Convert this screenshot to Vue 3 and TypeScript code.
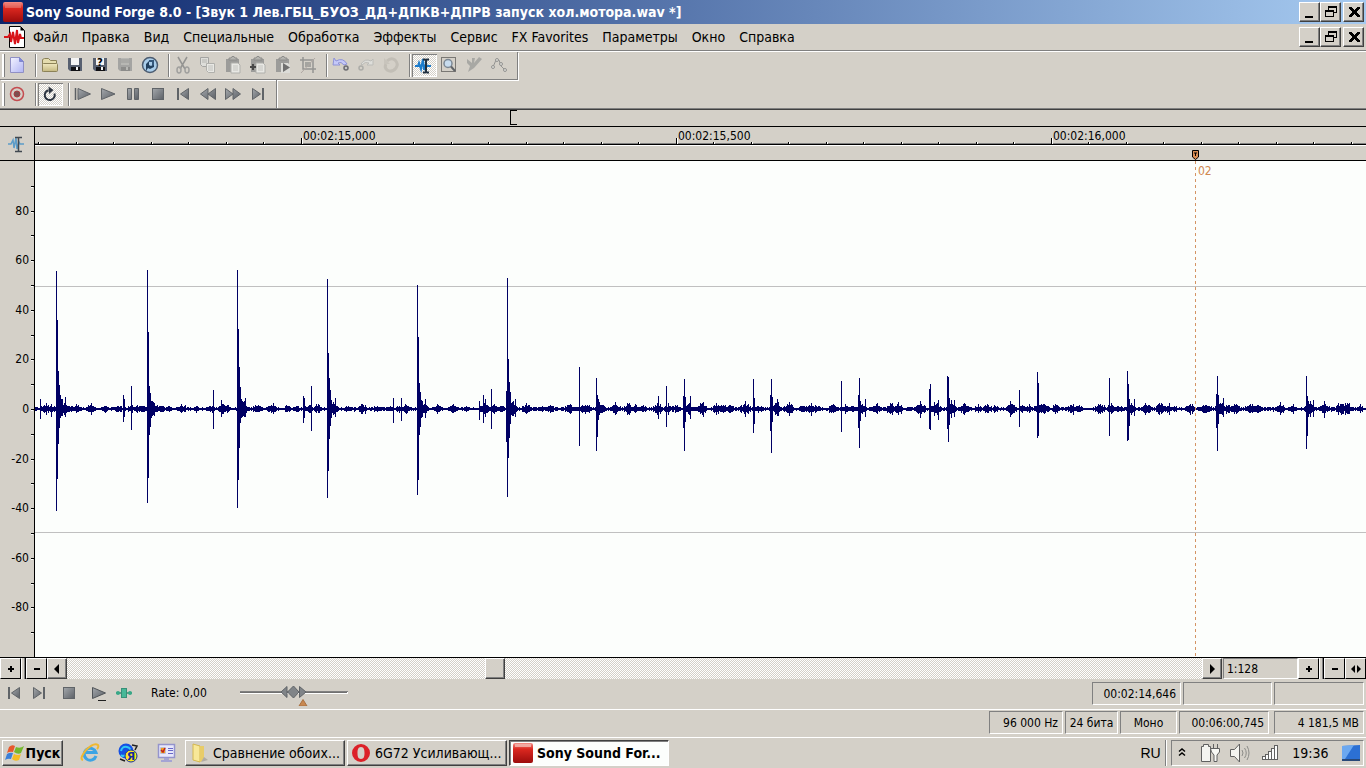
<script setup lang="ts">
import { computed, ref } from 'vue'

interface ToolButton { icon: string; label: string; pressed?: boolean }

const menus = ['Файл', 'Правка', 'Вид', 'Специальные', 'Обработка', 'Эффекты', 'Сервис', 'FX Favorites', 'Параметры', 'Окно', 'Справка']

const standardBar: ToolButton[][] = [
  [{ icon: 'new', label: 'New' }],
  [
    { icon: 'open', label: 'Open' },
    { icon: 'save', label: 'Save' },
    { icon: 'saveAs', label: 'Save As' },
    { icon: 'saveAll', label: 'Save All' },
    { icon: 'publish', label: 'Publish' },
  ],
  [
    { icon: 'cut', label: 'Cut' },
    { icon: 'copy', label: 'Copy' },
    { icon: 'paste', label: 'Paste' },
    { icon: 'mix', label: 'Mix' },
    { icon: 'playClip', label: 'Play Clipboard' },
    { icon: 'crop', label: 'Trim/Crop' },
  ],
  [
    { icon: 'undo', label: 'Undo' },
    { icon: 'redo', label: 'Redo' },
    { icon: 'repeat', label: 'Repeat' },
  ],
  [
    { icon: 'edit', label: 'Edit Tool', pressed: true },
    { icon: 'magnify', label: 'Magnify Tool' },
    { icon: 'pencil', label: 'Pencil Tool' },
    { icon: 'envelope', label: 'Envelope Tool' },
  ],
]

const transportBar: ToolButton[][] = [
  [{ icon: 'record', label: 'Record' }],
  [{ icon: 'loop', label: 'Loop Playback', pressed: true }],
  [
    { icon: 'playAll', label: 'Play All' },
    { icon: 'play', label: 'Play' },
    { icon: 'pause', label: 'Pause' },
    { icon: 'stop', label: 'Stop' },
    { icon: 'toStart', label: 'Go to Start' },
    { icon: 'rewind', label: 'Rewind' },
    { icon: 'forward', label: 'Forward' },
    { icon: 'toEnd', label: 'Go to End' },
  ],
]

const floppy = (body: string, label: string, slot: string) =>
  `<path d="M3 3H17V16H5L3 14Z" fill="${body}"/><rect x="6" y="3" width="8" height="7" fill="${label}"/><rect x="6" y="12" width="9" height="4" fill="${slot}"/><rect x="11" y="12" width="2" height="3" fill="${label}"/>`
const clipboard =
  '<path d="M3 4H16V17H3Z" fill="#9c9c9a"/><path d="M6 5V3H8L9 1.500H11L12 3H14V5Z" fill="#b4b4b0" stroke="#8c8c8a"/>'
const smallPage =
  '<path d="M8 8H15L17 10V18H8Z" fill="#e8e8e4" stroke="#b0b0ac"/><path d="M10 11H15M10 13H15M10 15H15" stroke="#c4c4c0"/>'

const icons: Record<string, string> = {
  new: '<path d="M3.500 2.500H12.500L16.500 6.500V17.500H3.500Z" fill="url(#g-page)" stroke="#9090c4"/><path d="M12.500 2.500V6.500H16.500Z" fill="#7f86dc" stroke="#8088cc"/>',
  open: '<path d="M2.500 16.500V4.500L4.500 3.500H8.500L10.500 5.500H16.500V8" fill="#e4dcae" stroke="#8c8258"/><rect x="2.500" y="8.500" width="15" height="8" rx="1" fill="url(#g-folder)" stroke="#8c8258"/>',
  save: floppy('#586070', '#f4f4f4', '#101014'),
  saveAs: floppy('#586070', '#f4f4f4', '#101014') + '<text x="10" y="11" font-family="DejaVu Sans" font-size="10" font-weight="bold" text-anchor="middle" fill="#000">?</text>',
  saveAll: floppy('#a4a4a2', '#b8b8b4', '#8c8c8a') + '<path d="M6 5H14M6 7H14" stroke="#9a9a98"/>',
  publish: '<circle cx="10" cy="10" r="7.500" fill="#a9cdea" stroke="#4c5c70" stroke-width="1.500"/><path d="M6 16V9L9 6V10L11 11L14 9V12L10 14L8 13Z" fill="#23415f"/><path d="M9 5H14V10L12 11V7H9Z" fill="#34587c"/>',
  cut: '<path d="M5 2L12 14M14 2L7 14" stroke="#949492" stroke-width="1.500"/><ellipse cx="6" cy="15" rx="2" ry="3" fill="none" stroke="#a0a09e" stroke-width="1.500"/><ellipse cx="14" cy="15" rx="2" ry="3" fill="none" stroke="#a0a09e" stroke-width="1.500"/>',
  copy: '<path d="M2.500 2.500H10.500V11.500H4.500L2.500 9.500Z" fill="#dededa" stroke="#a4a4a2"/><path d="M4 5H9M4 7H9" stroke="#b4b4b0"/><path d="M8.500 8.500H16.500V17.500H10.500L8.500 15.500Z" fill="#e8e8e4" stroke="#b0b0ac"/><path d="M10 11H15M10 13H15M10 15H15" stroke="#c0c0bc"/>',
  paste: clipboard + smallPage,
  mix: clipboard + smallPage + '<path d="M2 12H8M5 9V15" stroke="#484848" stroke-width="2"/>',
  playClip: clipboard + '<path d="M8 8H15L17 10V18H8Z" fill="#dcdcd8"/><path d="M10 8L17 12.500L10 17Z" fill="#707070"/>',
  crop: '<path d="M5 2V14H18M2 5H15V18" fill="none" stroke="#949492" stroke-width="1.500"/><rect x="7" y="7" width="6" height="5" fill="#a4a4a0"/><path d="M3 18L17 3" stroke="#b0a8a4"/>',
  undo: '<path d="M3 3L2 10H9L7 8Q10 6 13 10L16 9Q12 2 5 6Z" fill="#c4c8f8" stroke="#8e92d8"/><circle cx="15" cy="13" r="2" fill="#c8c8c8" stroke="#6c6c70" stroke-width="1.500"/>',
  redo: '<path d="M17 4V10H11L13 8Q9 6 6 10L5 9Q9 3 15 6Z" fill="#dededa" stroke="#bcbcb8"/><circle cx="5" cy="13" r="2" fill="#d4d0c8" stroke="#acaca8" stroke-width="1.500"/>',
  repeat: '<path d="M6 6Q10 2 14 5Q18 9 15 13Q11 18 6 15Q3 12 5 9" fill="none" stroke="#c2beb6" stroke-width="3"/><path d="M3 3V9H9Z" fill="#c8c4bc"/>',
  edit: '<path d="M1 11H4L5 8L7 14L9 4L10 15L12 9L13 11H17" fill="none" stroke="#1c7ccc" stroke-width="2"/><path d="M9 4.500H11L12 5.500L13 4.500H15M9 17.500H11L12 16.500L13 17.500H15M12 5V17" fill="none" stroke="#203040" stroke-width="2"/>',
  magnify: '<rect x="2.500" y="2.500" width="14" height="14" fill="none" stroke="#202020" stroke-dasharray="1 1"/><circle cx="9" cy="8.500" r="4" fill="#c8dcee" stroke="#7c8894" stroke-width="1.500"/><path d="M12 11.500L16 16" stroke="#606468" stroke-width="2"/>',
  pencil: '<path d="M3 4L8 8V3H11L10 8L15 2L18 4L10 13L4 17L6 11L3 8Z" fill="#a8a8a4"/>',
  envelope: '<path d="M4 12L7 5L10 5L12 11L16 15" fill="none" stroke="#949492"/><g fill="#dcdcd8" stroke="#949492"><circle cx="4" cy="12" r="1.500"/><circle cx="8" cy="5" r="1.500"/><circle cx="12" cy="9" r="1.500"/><circle cx="16" cy="15" r="1.500"/></g>',
  record: '<circle cx="10" cy="10" r="6.500" fill="none" stroke="#c44c50" stroke-width="1.500"/><circle cx="10" cy="10" r="3" fill="#7c5050" stroke="#a83c40"/>',
  loop: '<path d="M8.500 6.200A5 5 0 1 0 14.500 9.500" fill="none" stroke="#2c3440" stroke-width="2"/><path d="M8.500 2.500L13.500 6L9 10Z" fill="#2c3440"/>',
  playAll: '<path d="M2.500 4V16" stroke="#5c6064" stroke-width="1.500"/><path d="M5 4.500L17.500 10L5 15.500Z" fill="url(#g-steel)" stroke="#606468"/>',
  play: '<path d="M3.500 4.500L17 10L3.500 15.500Z" fill="url(#g-steel)" stroke="#606468"/>',
  pause: '<path d="M4.500 4.500H8.500V15.500H4.500ZM11.500 4.500H15.500V15.500H11.500Z" fill="url(#g-steel)" stroke="#606468"/>',
  stop: '<rect x="4.500" y="4.500" width="11" height="11" fill="url(#g-steel)" stroke="#606468"/>',
  toStart: '<path d="M5 4V16" stroke="#606468" stroke-width="2"/><path d="M15.500 4.500V15.500L7.500 10Z" fill="url(#g-steel)" stroke="#606468"/>',
  rewind: '<path d="M10 4.500V15.500L2.500 10ZM17.500 4.500V15.500L10 10Z" fill="url(#g-steel)" stroke="#606468"/>',
  forward: '<path d="M2.500 4.500V15.500L10 10ZM10 4.500V15.500L17.500 10Z" fill="url(#g-steel)" stroke="#606468"/>',
  toEnd: '<path d="M15 4V16" stroke="#606468" stroke-width="2"/><path d="M4.500 4.500V15.500L12.500 10Z" fill="url(#g-steel)" stroke="#606468"/>',
  playNormal: '<path d="M3.500 4.500L16.500 10L3.500 15.500Z" fill="url(#g-steel)" stroke="#505458"/><path d="M9 17.500H17" stroke="#202020"/>',
  scrub: '<path d="M2 10H18" stroke="#388870" stroke-width="1.500"/><circle cx="4" cy="10" r="2" fill="#38a888"/><circle cx="16" cy="10" r="2" fill="#38a888"/><rect x="7.500" y="5.500" width="5" height="9" fill="#48b898" stroke="#389078"/>',
}

const playBar: ToolButton[][] = [
  [{ icon: 'toStart', label: 'Go to Start' }, { icon: 'toEnd', label: 'Go to End' }],
  [{ icon: 'stop', label: 'Stop' }],
  [{ icon: 'playNormal', label: 'Play Normal' }, { icon: 'scrub', label: 'Scrub' }],
]

/* ---- time ruler and waveform; the view spans 1331 units by 496 units ---- */
const VIEW_W = 1331
const VIEW_H = 496
const MID = VIEW_H / 2
const left = (x: number) => ({ left: (x / VIEW_W) * 100 + '%' })

const times = [
  { x: 266, text: '00:02:15,000' },
  { x: 641, text: '00:02:15,500' },
  { x: 1016, text: '00:02:16,000' },
]
const minorTicks = Array.from({ length: 36 }, (_, i) => Math.floor(3.5 + i * 37.5)).filter((x) => x < VIEW_W)
const levels = [80, 60, 40, 20, 0, -20, -40, -60, -80]
const levelTicks = Array.from({ length: 19 }, (_, i) => Math.round((i + 1) * 24.8))

// Transients: column, height above and depth below the zero line
const peaks: [number, number, number][] = [
  [5, 10, 10], [16, 5, 8], [21, 138, 102], [22, 89, 70], [23, 38, 35], [24, 24, 19], [25, 14, 9], [26, 10, 7], [27, 10, 7], [30, 12, 8],
  [88, 14, 13], [89, 10, 8], [96, 23, 21], [112, 139, 94], [113, 77, 69], [114, 23, 26], [115, 16, 18], [116, 8, 9],
  [178, 19, 20], [186, 9, 8], [202, 139, 99], [203, 80, 71], [204, 42, 39], [205, 22, 14], [206, 10, 9], [210, 11, 8],
  [268, 13, 14], [269, 11, 9], [276, 23, 22], [292, 130, 89], [293, 56, 62], [294, 31, 30], [295, 19, 17], [296, 9, 9], [300, 11, 8],
  [358, 11, 14], [366, 11, 12], [382, 124, 86], [383, 72, 71], [384, 26, 26], [385, 17, 18], [386, 9, 9], [390, 10, 9],
  [444, 8, 11], [448, 14, 14], [450, 10, 8], [456, 20, 20], [471, 18, 33], [472, 131, 88], [473, 50, 49], [474, 27, 29], [475, 17, 15], [480, 10, 8],
  [544, 42, 37], [561, 31, 42], [562, 14, 28], [563, 10, 11],
  [623, 13, 10], [631, 23, 18], [648, 13, 19], [649, 30, 42], [650, 12, 13], [655, 13, 10],
  [718, 30, 24], [719, 11, 15], [735, 14, 22], [736, 30, 44], [737, 12, 13], [742, 10, 7],
  [806, 28, 23], [823, 14, 19], [824, 31, 39], [825, 8, 12], [830, 10, 8],
  [894, 20, 20], [895, 25, 21], [903, 9, 11], [912, 33, 20], [913, 32, 33], [914, 11, 16], [919, 9, 8],
  [984, 19, 18], [1002, 37, 29], [1003, 26, 27], [1074, 31, 27], [1092, 38, 32], [1093, 25, 31], [1094, 10, 17], [1099, 10, 7],
  [1181, 15, 19], [1182, 33, 42], [1183, 14, 15], [1188, 11, 8], [1271, 33, 40], [1272, 13, 27], [1278, 9, 8],
]
// Background murmur: column and half-height of each swell
const swells: [number, number][] = [
  [10, 6], [16, 4], [28, 8], [36, 4], [42, 5], [56, 5], [70, 5], [83, 4], [96, 4], [101, 4], [107, 5], [118, 8], [126, 5], [133, 4], [147, 5],
  [161, 4], [175, 4], [187, 7], [193, 4], [208, 8], [222, 6], [237, 6], [252, 4], [261, 4], [273, 5], [282, 5], [298, 8], [312, 4],
  [327, 6], [342, 4], [354, 4], [364, 4], [371, 5], [388, 8], [403, 5], [418, 6], [431, 4], [449, 7], [458, 5], [466, 5], [477, 8],
  [492, 6], [507, 4], [514, 5], [534, 7], [547, 5], [552, 5], [565, 7], [580, 6], [593, 6], [601, 5], [607, 4], [623, 6], [633, 5],
  [641, 4], [653, 6], [667, 7], [681, 5], [688, 6], [694, 6], [710, 7], [723, 4], [741, 8], [754, 6], [768, 5], [775, 6], [781, 5],
  [798, 6], [810, 4], [817, 4], [826, 7], [841, 6], [856, 6], [863, 6], [885, 7], [900, 7], [916, 8], [930, 6], [943, 4], [952, 6],
  [960, 4], [976, 8], [987, 5], [994, 4], [1004, 8], [1008, 8], [1021, 5], [1036, 6], [1043, 5], [1065, 7], [1076, 5], [1083, 4],
  [1095, 6], [1111, 6], [1126, 7], [1134, 5], [1139, 4], [1155, 6], [1168, 6], [1172, 5], [1185, 7], [1193, 5], [1200, 7], [1215, 6],
  [1223, 5], [1245, 6], [1257, 5], [1274, 8], [1289, 7], [1305, 7], [1312, 7], [1325, 4],
]

const waveform = computed(() => {
  const up = new Array<number>(VIEW_W).fill(1)
  const down = new Array<number>(VIEW_W).fill(1)
  let seed = 20617
  const random = () => (seed = (seed * 16807) % 2147483647) / 2147483647
  for (let x = 0; x < VIEW_W; x++) {
    let swell = 2
    for (const [centre, size] of swells) {
      const distance = Math.abs(x - centre)
      if (distance < 6) swell = Math.max(swell, size * (1 - distance / 8))
    }
    // now and then a single column reaches the full swell
    const gain = random() > 0.85 ? 1.15 : 0.5 + random() * 0.4
    up[x] = Math.max(1, Math.round(swell * gain))
    down[x] = Math.max(1, Math.round(swell * gain * (0.8 + random() * 0.3)))
  }
  for (const [x, above, below] of peaks) {
    up[x] = above
    down[x] = below
  }
  return up.map((u, x) => `M${x} ${MID - u}h1v${u + down[x]}h-1z`).join('')
})

const counters = ['00:02:14,646', '', '']
const status = [
  { text: '96 000 Hz', kind: 'rate' },
  { text: '24 бита', kind: 'depth' },
  { text: 'Моно', kind: 'mono' },
  { text: '00:06:00,745', kind: 'length' },
  { text: '4 181,5 MB', kind: 'space' },
]
const windowButtons = ['minimize', 'restore', 'close']
const rate = ref(0)
</script>

<template>
  <div class="app">
    <svg class="defs" aria-hidden="true">
      <defs>
        <linearGradient id="g-page" x1="0" y1="0" x2="1" y2="1"><stop offset="0" stop-color="#f4f4ff" /><stop offset="1" stop-color="#b0b4f4" /></linearGradient>
        <linearGradient id="g-folder" x1="0" y1="0" x2="0" y2="1"><stop offset="0" stop-color="#f0e8c0" /><stop offset="1" stop-color="#c4b880" /></linearGradient>
        <linearGradient id="g-steel" x1="0" y1="0" x2="1" y2="1"><stop offset="0" stop-color="#a4a8ac" /><stop offset="1" stop-color="#5c6066" /></linearGradient>
        <linearGradient id="g-red" x1="0" y1="0" x2="0" y2="1"><stop offset="0" stop-color="#f49088" /><stop offset="0.3" stop-color="#dc2820" /><stop offset="1" stop-color="#9c0c0c" /></linearGradient>
      </defs>
    </svg>

    <header class="titlebar">
      <svg class="logo" viewBox="0 0 20 20"><rect width="20" height="20" rx="2" fill="url(#g-red)" /><path d="M2 2H18V6H2Z" fill="#e88880" opacity=".5" /></svg>
      <h1>Sony Sound Forge 8.0 - [Звук 1 Лев.ГБЦ_БУОЗ_ДД+ДПКВ+ДПРВ запуск хол.мотора.wav *]</h1>
      <div class="winbtns">
        <button v-for="b in windowButtons" :key="b" :class="['winbtn', b]" :aria-label="b">
          <svg viewBox="0 0 16 14" shape-rendering="crispEdges">
            <path v-if="b === 'minimize'" d="M3 11H11V13H3Z" />
            <path v-else-if="b === 'restore'" d="M5 1H14V8H11V12H2V5H5ZM6 3V5H11V7H13V3ZM3 7V11H10V7Z" fill-rule="evenodd" />
            <path v-else d="M3 2H5V3H6V4H7V5H9V4H10V3H11V2H13V3H12V4H11V5H10V6H9V7H10V8H11V9H12V10H13V11H11V10H10V9H9V8H7V9H6V10H5V11H3V10H4V9H5V8H6V7H7V6H6V5H5V4H4V3H3Z" stroke="#000" stroke-width="1" />
          </svg>
        </button>
      </div>
    </header>

    <nav class="menubar">
      <svg class="docicon" viewBox="0 0 22 22"><path d="M5.500 .500H16.500L20.500 4.500V21.500H5.500Z" fill="#fff" stroke="#000" /><path d="M16.500 .500V4.500H20.500Z" fill="#000" /><path d="M0 11H4L6 8L7 16L9 6L11 18L13 4L14 17L16 8L17 12H20" fill="none" stroke="#d81418" stroke-width="2" /></svg>
      <button v-for="m in menus" :key="m" class="menu">{{ m }}</button>
      <div class="winbtns">
        <button v-for="b in windowButtons" :key="b" :class="['winbtn', b]" :aria-label="'document ' + b">
          <svg viewBox="0 0 16 14" shape-rendering="crispEdges">
            <path v-if="b === 'minimize'" d="M3 11H11V13H3Z" />
            <path v-else-if="b === 'restore'" d="M5 1H14V8H11V12H2V5H5ZM6 3V5H11V7H13V3ZM3 7V11H10V7Z" fill-rule="evenodd" />
            <path v-else d="M3 2H5V3H6V4H7V5H9V4H10V3H11V2H13V3H12V4H11V5H10V6H9V7H10V8H11V9H12V10H13V11H11V10H10V9H9V8H7V9H6V10H5V11H3V10H4V9H5V8H6V7H7V6H6V5H5V4H4V3H3Z" stroke="#000" stroke-width="1" />
          </svg>
        </button>
      </div>
    </nav>

    <section class="dock">
      <div v-for="(bar, n) in [standardBar, transportBar]" :key="n" :class="['toolbar', n ? 'second' : 'first']" role="toolbar">
        <span class="grip"></span>
        <div v-for="(group, g) in bar" :key="g" class="group">
          <button v-for="t in group" :key="t.icon" :class="['tool', { pressed: t.pressed }]" :aria-label="t.label">
            <svg viewBox="0 0 20 20" v-html="icons[t.icon]"></svg>
          </button>
        </div>
      </div>
    </section>

    <div class="overview">
      <svg viewBox="0 0 1366 16" preserveAspectRatio="none" shape-rendering="crispEdges"><path d="M517 0H510V15H517V14H511V1H517Z" /></svg>
    </div>

    <main class="editor">
      <div class="corner">
        <svg viewBox="0 0 20 20"><path d="M1 10H4L6 6L7 14L9 4L10 15L12 8L13 10H17" fill="none" stroke="#5c9cc8" stroke-width="1.500" /><path d="M8 3.500H15M8 17.500H15M11.500 4V17" fill="none" stroke="#404850" stroke-width="1.500" /></svg>
      </div>
      <div class="ruler">
        <div class="scale">
          <span v-for="t in times" :key="t.x" class="time" :style="left(t.x + 2)">{{ t.text }}</span>
          <svg :viewBox="`0 0 ${VIEW_W} 19`" preserveAspectRatio="none" shape-rendering="crispEdges">
            <rect x="0" y="16" :width="VIEW_W" height="1" fill="#808080" />
            <rect x="0" y="17" :width="VIEW_W" height="1" fill="#000" />
            <rect x="0" y="18" :width="VIEW_W" height="1" fill="#fff" />
            <template v-for="x in minorTicks" :key="x">
              <rect :x="x" y="15" width="1" height="2" fill="#000" /><rect :x="x + 1" y="15" width="1" height="2" fill="#fff" />
            </template>
            <template v-for="t in times" :key="t.text">
              <rect :x="t.x" y="11" width="1" height="6" fill="#000" /><rect :x="t.x + 1" y="11" width="1" height="6" fill="#fff" />
            </template>
          </svg>
        </div>
        <div class="markers">
          <svg class="pin" :style="left(1157)" viewBox="0 0 7 10"><path d="M.500 .500H6.500V7L3.500 9.500L.500 7Z" fill="#d88c54" stroke="#000" /><path d="M2 3H5M3.500 3V6" stroke="#000" /></svg>
        </div>
      </div>
      <div class="levels">
        <div class="numbers"><span v-for="l in levels" :key="l">{{ l }}</span></div>
        <svg :viewBox="`0 0 3 ${VIEW_H}`" preserveAspectRatio="none" shape-rendering="crispEdges">
          <template v-for="y in levelTicks" :key="y">
            <rect x="0" :y="y" width="3" height="1" fill="#000" /><rect x="0" :y="y + 1" width="2" height="1" fill="#fff" />
          </template>
        </svg>
      </div>
      <div class="plot">
        <svg :viewBox="`0 0 ${VIEW_W} ${VIEW_H}`" preserveAspectRatio="none" shape-rendering="crispEdges">
          <rect x="0" y="125" :width="VIEW_W" height="1" fill="#c0c0c0" />
          <rect x="0" y="371" :width="VIEW_W" height="1" fill="#c0c0c0" />
          <path :d="waveform" fill="#000064" />
          <path :d="`M1160.500 0V${VIEW_H}`" stroke="#d49464" stroke-dasharray="3 3" />
        </svg>
        <span class="marker-name" :style="left(1163)">02</span>
      </div>
    </main>

    <div class="scrollrow">
      <button class="flat" aria-label="Zoom in level"><svg viewBox="0 0 12 12"><path d="M3 6H9M6 3V9" stroke="#000" stroke-width="2" /></svg></button>
      <span class="splitter"></span>
      <button class="flat" aria-label="Zoom out level"><svg viewBox="0 0 12 12"><path d="M3 6H9" stroke="#000" stroke-width="2" /></svg></button>
      <button class="arrow" aria-label="Scroll left"><svg viewBox="0 0 12 12"><path d="M8 1V11L3 6Z" /></svg></button>
      <div class="track"><button class="thumb" aria-label="Scroll position"></button></div>
      <button class="arrow" aria-label="Scroll right"><svg viewBox="0 0 12 12"><path d="M4 1V11L9 6Z" /></svg></button>
      <output class="ratio">1:128</output>
      <button class="flat" aria-label="Zoom in time"><svg viewBox="0 0 12 12"><path d="M3 6H9M6 3V9" stroke="#000" stroke-width="2" /></svg></button>
      <span class="splitter"></span>
      <button class="flat" aria-label="Zoom out time"><svg viewBox="0 0 12 12"><path d="M3 6H9" stroke="#000" stroke-width="2" /></svg></button>
      <button class="flat" aria-label="Zoom to window"><svg viewBox="0 0 12 12"><path d="M5 2V10L1 6ZM7 2V10L11 6Z" /></svg></button>
    </div>

    <section class="playbar">
      <div v-for="(group, g) in playBar" :key="g" class="playgroup">
        <button v-for="t in group" :key="t.icon" class="tool" :aria-label="t.label"><svg viewBox="0 0 20 20" v-html="icons[t.icon]"></svg></button>
      </div>
      <label class="ratelabel" for="rate">Rate: 0,00</label>
      <div class="slider">
        <svg viewBox="0 0 108 26">
          <g shape-rendering="crispEdges"><rect y="11" width="108" height="1" fill="#808080" /><rect y="12" width="108" height="2" fill="#fff" /><rect y="12" width="107" height="1" fill="#707070" /></g>
          <path d="M47 6.500V17.500L41 12ZM59.500 6.500V17.500L66 12ZM53.500 6L59 12L53.500 18L47.500 12Z" fill="#808488" stroke="#606468" />
          <path d="M63 19.500L67 26H59Z" fill="#c88850" stroke="#a87040" />
        </svg>
        <input id="rate" v-model.number="rate" type="range" min="-100" max="100" />
      </div>
      <div class="cells">
        <output v-for="(c, i) in counters" :key="i" :class="['cell', i === 2 ? 'space' : 'wide']">{{ c }}</output>
      </div>
    </section>

    <footer class="statusbar">
      <div class="cells">
        <span v-for="s in status" :key="s.kind" :class="['cell', s.kind]">{{ s.text }}</span>
      </div>
    </footer>

    <div class="taskbar">
      <button class="start">
        <svg viewBox="0 0 20 20"><path d="M4 4Q7 1 10 3L8 9Q5 8 2 10Z" fill="#e8582c" /><path d="M11 4Q15 6 19 3L16 10Q13 12 9 9Z" fill="#74b82c" /><path d="M2 11Q5 9 8 10L6 16Q3 15 0 17Z" fill="#3c80d8" /><path d="M9 11Q13 13 16 11L14 17Q10 19 7 16Z" fill="#f4bc24" /></svg>
        <span>Пуск</span>
      </button>
      <div class="quick">
        <button aria-label="Internet Explorer"><svg viewBox="0 0 20 20"><path d="M16 13A6 6 0 1 1 16 9.500H6" fill="none" stroke="#3ca4e4" stroke-width="3" /><path d="M3 17Q-1 16 6 7Q14 -1 18 2Q19 4 17 6" fill="none" stroke="#f0b830" stroke-width="2" /></svg></button>
        <button aria-label="Яндекс"><svg viewBox="0 0 20 20"><circle cx="8" cy="8" r="7.500" fill="#1450e4" /><path d="M3 8Q4 3 9 4Q13 5 12 8M3 12Q5 14 7 12" stroke="#30c8f4" stroke-width="2" fill="none" /><path d="M14 2L19 3L17 7M2 16L7 18" stroke="#202020" stroke-width="1.500" fill="none" /><circle cx="13" cy="13" r="6" fill="#fce81c" stroke="#1430a0" /><text x="13" y="17" font-family="DejaVu Sans" font-size="11" font-weight="bold" text-anchor="middle" fill="#1428a0">Я</text></svg></button>
        <button aria-label="Display settings"><svg viewBox="0 0 20 20"><path d="M2.500 1.500H18.500V14.500H2.500Z" fill="#e8e8fc" stroke="#9494cc" stroke-width="1.500" /><path d="M4.500 4.500H9.500V10.500H4.500Z" fill="#fff" stroke="#c0c0d0" /><path d="M5 5H9V10H5Z" fill="#f0a020" /><path d="M5 7L7 9L9 5" fill="none" stroke="#c02020" stroke-width="1.500" /><path d="M12 5.500H17M12 7.500H17M12 10.500H17" stroke="#6868c8" /><path d="M8 15H13V17H16V19H5V17H8Z" fill="#a4a4d4" /></svg></button>
      </div>
      <div class="tasks">
        <button class="task"><svg viewBox="0 0 20 20"><path d="M4 1L11 3V19L4 17Z" fill="#f8e898" stroke="#d4b850" /><path d="M11 3H15V17L11 19Z" fill="#e8cc68" /><path d="M15 14L19 17L12 19Z" fill="#b0aca4" /></svg><span>Сравнение обоих...</span></button>
        <button class="task"><svg viewBox="0 0 20 20"><path d="M10 1A9 9 0 1 0 10 19A9 9 0 1 0 10 1ZM10 4C13 4 13.500 7 13.500 10S13 16 10 16S6.500 13 6.500 10S7 4 10 4Z" fill="#dc2028" fill-rule="evenodd" /></svg><span>6G72 Усиливающ...</span></button>
        <button class="task active"><svg viewBox="0 0 20 20"><rect width="20" height="20" rx="2" fill="url(#g-red)" /><path d="M2 1H18V4H2Z" fill="#f4b8b0" opacity=".8" /></svg><span>Sony Sound For...</span></button>
      </div>
      <button class="lang">RU</button>
      <div class="tray">
        <button class="chevron" aria-label="Show hidden icons"><svg viewBox="0 0 10 12"><path d="M2 4.500L5 2L8 4.500M2 8.500L5 6L8 8.500" fill="none" stroke="#000" stroke-width="1.500" /></svg></button>
        <button class="trayicon" aria-label="Battery"><svg viewBox="0 0 20 20"><path d="M1.500 3.500H3.500V1.500H8.500V3.500H10.500V18.500H1.500Z" fill="#f4f4f0" stroke="#606060" /><path d="M13.500 1V5M17.500 1V5" stroke="#606060" /><path d="M10.500 5.500H19.500V9L17 12V18.500H14V12L11.500 9Z" fill="#f8f8f4" stroke="#606060" /></svg></button>
        <button class="trayicon" aria-label="Volume"><svg viewBox="0 0 20 20"><path d="M.500 6.500H4.500L9.500 1V19L4.500 13.500H.500Z" fill="#f4f4f0" stroke="#606060" /><path d="M12 7Q14 10 12 13M14.500 5Q18 10 14.500 15M17 3Q21 10 17 17" fill="none" stroke="#8c8c88" /></svg></button>
        <button class="trayicon" aria-label="Network"><svg viewBox="0 0 20 20"><g fill="#fcfcfc" stroke="#606060"><rect x="2.500" y="13.500" width="3" height="3" /><rect x="5.500" y="11.500" width="3" height="5" /><rect x="8.500" y="8.500" width="3" height="8" /><rect x="11.500" y="5.500" width="3" height="11" /><rect x="14.500" y="2.500" width="3" height="14" /></g></svg></button>
        <time class="clock">19:36</time>
        <button class="desktop" aria-label="Show desktop"><svg viewBox="0 0 20 16"><path d="M1 1L19 0V14H1Z" fill="#2c70d4" /><path d="M1 1L13 0L4 14H1Z" fill="#6ca8f0" /><path d="M1 14H19V16H1Z" fill="#284878" /></svg></button>
      </div>
    </div>
  </div>
</template>

<style>
body { margin: 0; background: #d4d0c8; }
</style>

<style scoped>
.app {
  display: flex;
  flex-direction: column;
  min-height: 100vh;
  background: #d4d0c8;
  color: #000;
  font-family: "DejaVu Sans Condensed", "Noto Sans", sans-serif;
  font-size: 12px;
  line-height: 16px;
  overflow: hidden;
}
.app * { box-sizing: border-box; }
.defs { position: absolute; width: 0; height: 0; }
button {
  margin: 0;
  padding: 0;
  border: 0;
  background: none;
  color: inherit;
  font: inherit;
  display: flex;
  align-items: center;
  justify-content: center;
}
svg { display: block; flex: none; }

.titlebar {
  display: flex;
  align-items: center;
  height: 24px;
  padding: 0 2px 0 3px;
  background: linear-gradient(90deg, #0a246a, #a6caf0);
}
.logo { width: 20px; height: 20px; }
h1 { margin: 0 0 0 3px; flex: 1; font-size: 14px; font-weight: bold; color: #fff; white-space: nowrap; overflow: hidden; }
.winbtns { display: flex; margin-left: auto; }
.winbtn {
  width: 21px;
  height: 20px;
  padding: 2px 0 0 2px;
  align-items: flex-start;
  justify-content: flex-start;
  background: #d4d0c8;
  border: 1px solid;
  border-color: #fff #404040 #404040 #fff;
  box-shadow: inset -1px -1px 0 #808080;
}
.winbtn svg { width: 16px; height: 14px; }
.winbtn.close { margin-left: 2px; }

.menubar {
  display: flex;
  align-items: center;
  height: 28px;
  padding: 0 2px 2px 4px;
  border-bottom: 1px solid #fff;
  box-shadow: inset 0 -1px 0 #808080;
}
.docicon { width: 22px; height: 22px; }
.menu { height: 24px; padding: 0 7px; font-size: 14px; white-space: nowrap; }

.dock {
  display: flex;
  flex-direction: column;
  align-items: flex-start;
  height: 58px;
  border-bottom: 1px solid #404040;
  box-shadow: inset 0 -1px 0 #808080;
}
.toolbar {
  display: flex;
  align-items: center;
  height: 28px;
  padding-right: 5px;
  border-right: 1px solid #808080;
  box-shadow: 1px 0 0 #fff;
}
.toolbar.first { border-bottom: 1px solid #808080; box-shadow: 1px 1px 0 #fff; }
.toolbar.second { padding-top: 1px; }
.grip { width: 5px; height: 23px; border-right: 1px solid #808080; border-left: 2px solid #d4d0c8; background: #fff; }
.group { display: flex; align-items: center; }
.group + .group::before { content: ""; width: 0; height: 23px; margin: 0 1px 0 5px; border-left: 1px solid #808080; border-right: 1px solid #fff; }
.tool { width: 25px; height: 23px; padding: 1px 2px 0; align-items: flex-start; justify-content: flex-start; }
.tool svg { width: 20px; height: 20px; }
.pressed {
  box-shadow: inset 1px 1px 0 #808080, inset -1px -1px 0 #fff;
  background: repeating-conic-gradient(#fff 0 25%, #d4d0c8 0 50%) 0 0 / 2px 2px;
}

.overview { height: 17px; border-bottom: 1px solid #000; }
.overview svg { width: 100%; height: 16px; }

.editor {
  flex: 1;
  display: grid;
  grid-template-columns: 35px 1fr;
  grid-template-rows: 34px 1fr;
  border-bottom: 1px solid #000;
}
.corner { display: flex; align-items: center; justify-content: center; border-right: 1px solid #000; border-bottom: 1px solid #000; }
.corner svg { width: 20px; height: 20px; }
.ruler { display: flex; flex-direction: column; border-bottom: 1px solid #000; overflow: hidden; }
.scale { position: relative; height: 19px; }
.scale svg { width: 100%; height: 19px; }
.time { position: absolute; top: 1px; white-space: nowrap; }
.markers { position: relative; flex: 1; }
.pin { position: absolute; top: 4px; width: 7px; height: 10px; }
.levels { display: flex; border-right: 1px solid #000; }
.levels svg { width: 3px; height: 100%; }
.numbers { flex: 1; display: grid; grid-template-rows: 1fr repeat(9, 2fr) 1fr; text-align: right; padding-right: 2px; }
.numbers::before { content: ""; }
.numbers span { display: flex; align-items: center; justify-content: flex-end; }
.plot { position: relative; min-height: 240px; background: #fcfefc; }
.plot svg { position: absolute; width: 100%; height: 100%; }
.marker-name { position: absolute; top: 2px; color: #d08850; }

.scrollrow { display: flex; height: 21px; }
.flat { width: 21px; border: 1px solid; border-color: #fff #000 #000 #fff; }
.scrollrow svg { width: 12px; height: 12px; }
.splitter { width: 5px; border-left: 1px solid #fff; border-right: 1px solid #000; box-shadow: inset -1px 0 0 #808080; }
.arrow { width: 20px; border: 1px solid; border-color: #fff #404040 #404040 #fff; box-shadow: inset -1px -1px 0 #808080; }
.track { flex: 1; padding-left: 418px; background: repeating-conic-gradient(#fff 0 25%, #d4d0c8 0 50%) 0 0 / 2px 2px; }
.thumb { width: 20px; height: 21px; background: #d4d0c8; border: 1px solid; border-color: #fff #404040 #404040 #fff; box-shadow: inset -1px -1px 0 #808080; }
.ratio { width: 75px; margin: 0 0 0 1px; padding: 2px 3px; border: 1px solid; border-color: #808080 #fff #fff #808080; }

.playbar { display: flex; align-items: center; height: 31px; padding: 0 2px 2px 2px; border-bottom: 1px solid #fff; }
.playgroup { display: flex; margin-right: 5px; }
.ratelabel { width: 89px; margin-left: 9px; }
.slider { position: relative; width: 108px; height: 26px; }
.slider svg { width: 108px; height: 26px; }
.slider input { position: absolute; inset: 0; width: 100%; height: 100%; margin: 0; opacity: 0; }
.cells { display: flex; gap: 2px; margin-left: auto; }
.cell {
  height: 23px;
  padding: 3px 4px;
  border: 1px solid;
  border-color: #808080 #fff #fff #808080;
  text-align: right;
  white-space: nowrap;
}
.wide, .length, .space { width: 90px; }
.wide { width: 89px; }
.rate { width: 74px; }
.depth { width: 53px; text-align: center; padding: 3px 0; }
.mono { width: 57px; text-align: center; }
.length + .space { margin-left: 3px; }

.statusbar { display: flex; align-items: center; height: 28px; padding: 0 2px 3px 2px; border-bottom: 1px solid #fff; }

.taskbar { display: flex; align-items: center; height: 30px; padding: 0 2px; font-size: 14px; }
.start {
  width: 61px;
  height: 26px;
  gap: 1px;
  font-weight: bold;
  border: 1px solid;
  border-color: #fff #404040 #404040 #fff;
  box-shadow: inset -1px -1px 0 #808080;
}
.start svg, .quick svg, .task svg, .trayicon svg { width: 20px; height: 20px; }
.quick { display: flex; gap: 18px; margin: 0 9px 0 17px; }
.tasks { display: flex; gap: 2px; flex: 1; }
.task {
  width: 160px;
  height: 26px;
  padding: 0 3px;
  gap: 4px;
  justify-content: flex-start;
  white-space: nowrap;
  overflow: hidden;
  border: 1px solid;
  border-color: #fff #404040 #404040 #fff;
  box-shadow: inset -1px -1px 0 #808080;
}
.task.active { font-weight: bold; background: #fcfefc; border-color: #404040 #fff #fff #404040; box-shadow: inset 1px 1px 0 #808080; }
.lang { width: 30px; height: 26px; font-family: "Liberation Sans", sans-serif; border-right: 1px solid #808080; box-shadow: 1px 0 0 #fff; margin-right: 5px; }
.tray { display: flex; align-items: center; height: 26px; width: 193px; border: 1px solid; border-color: #808080 #fff #fff #808080; padding: 0 2px; }
.chevron { width: 16px; }
.chevron svg { width: 10px; height: 12px; }
.trayicon { margin-left: 10px; }
.clock { margin: 0 auto; }
.desktop svg { width: 20px; height: 16px; }
</style>
